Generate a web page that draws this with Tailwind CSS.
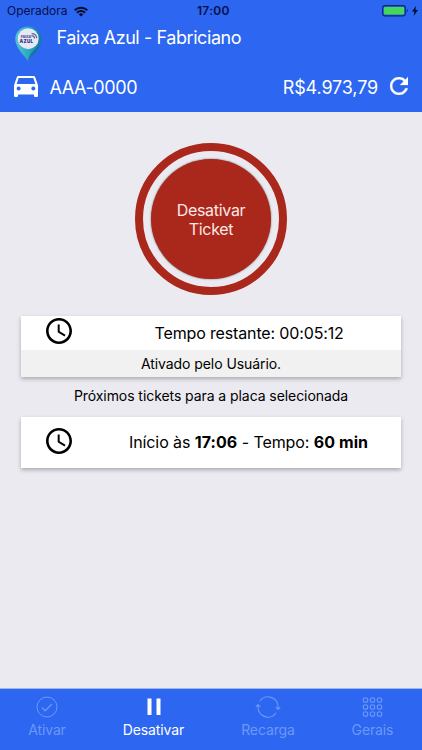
<!DOCTYPE html>
<html lang="pt-BR">
<head>
<meta charset="utf-8">
<title>Faixa Azul - Fabriciano</title>
<script src="https://cdn.jsdelivr.net/npm/@tailwindcss/browser@4"></script>
</head>
<body class="w-[422px] h-[750px] overflow-hidden bg-[#ebeaf1] font-['Inter','Liberation_Sans',sans-serif] text-black flex flex-col whitespace-nowrap">
<header class="h-[112px] shrink-0 bg-[#2c66f1] text-white flex flex-col">
  <div class="h-[22px] pl-[7px] pr-[4px] grid grid-cols-[190px_1fr_auto] items-center text-[#06104a]">
    <div class="flex items-center gap-[6px]">
      <span class="text-[12px] leading-[22px]">Operadora</span>
      <svg class="w-[14px] h-[11px]" viewBox="0 0 14 11" fill="none" stroke="#050b28" stroke-width="2"><path d="M.7 4.2a9 9 0 0 1 12.6 0M3 6.7a5.8 5.8 0 0 1 8 0"/><path d="M7 10.6 4.8 8.4a3.2 3.2 0 0 1 4.4 0z" fill="#050b28" stroke="none"/></svg>
    </div>
    <span class="text-[12px] leading-[22px] font-semibold tracking-[0.3px]">17:00</span>
    <div class="flex items-center gap-[3px]">
      <svg class="w-[27px] h-[12px]" viewBox="0 0 27 12"><rect x=".6" y=".6" width="22.8" height="10.3" rx="2.4" fill="none" stroke="#0b2a70" stroke-width="1.1"/><rect x="2" y="2" width="20" height="7.6" rx="1" fill="#45d65a"/><path d="M24.8 4c1.4.5 1.4 3 0 3.5z" fill="#0b2a70"/></svg>
      <svg class="w-[6px] h-[10px]" viewBox="0 0 6 10"><path d="M4 0 0 5.6h2.5L1.7 10 6 4.1H3.4z" fill="#050b28"/></svg>
    </div>
  </div>
  <div class="h-[40px] pl-[14px] flex items-start">
    <svg class="w-[29px] h-[36px] mt-[4px]" viewBox="0 0 29 36">
      <defs><linearGradient id="pin" x1="0" x2="1"><stop offset="0" stop-color="#58c3d3"/><stop offset=".5" stop-color="#2ba9c5"/><stop offset="1" stop-color="#16769f"/></linearGradient></defs>
      <path d="M14 .5C6.500 .5 1.300 6 1.300 13c0 8.500 8 15.500 12.700 22 4.700-6.500 13.300-13.500 13.300-22C27.300 6 21.500 .5 14 .5z" fill="url(#pin)"/>
      <path d="M14 35c1-9 8-11 12.500-17C24 25 18 29.500 14 35z" fill="#125e87" opacity=".6"/>
      <circle cx="14.200" cy="12.700" r="10.500" fill="#e4e9f3"/>
      <text x="6.800" y="11.800" font-size="3.600" font-weight="800" fill="#55509b" textLength="10.500">FAIXA</text>
      <text x="5.600" y="16.800" font-size="4.600" font-weight="900" fill="#39348b" textLength="13.500">AZUL</text>
      <path d="M17.600 7.700c2.800-.3 5 1.500 5.200 4.500M17.400 9.700c1.800 0 3 1 3.300 2.800" stroke="#6660a5" fill="none" stroke-width="1.200"/>
    </svg>
    <h1 class="ml-[13.500px] mt-[4px] text-[18px] leading-[24px] font-normal tracking-[-0.42px]">Faixa Azul - Fabriciano</h1>
  </div>
  <div class="h-[50px] pl-[14px] pr-[14px] flex items-center justify-between">
    <div class="flex items-center">
      <svg class="w-[24px] h-[21px] mt-[-1px]" viewBox="3 5 18 16" preserveAspectRatio="none" fill="white"><path d="M18.920 6.010C18.720 5.420 18.160 5 17.500 5h-11c-.66 0-1.210.42-1.420 1.010L3 12v8c0 .55.45 1 1 1h1c.55 0 1-.45 1-1v-1h12v1c0 .55.45 1 1 1h1c.55 0 1-.45 1-1v-8l-2.080-5.990zM6.500 16c-.83 0-1.500-.67-1.500-1.500S5.670 13 6.500 13s1.500.67 1.500 1.500S7.330 16 6.500 16zm11 0c-.83 0-1.500-.67-1.500-1.500s.67-1.500 1.500-1.500 1.500.67 1.500 1.500-.67 1.500-1.500 1.500zM5 11l1.500-4.500h11L19 11H5z"/></svg>
      <span class="ml-[11.500px] mt-[2px] text-[18px] leading-[24px] tracking-[-0.4px]">AAA-0000</span>
    </div>
    <div class="flex items-center">
      <span class="mr-[12px] mt-[2px] text-[18px] leading-[24px] tracking-[-0.15px]">R$4.973,79</span>
      <svg class="w-[18px] h-[18px] mt-[-2px]" viewBox="4 4 16 16" fill="white"><path stroke="white" stroke-width=".3" d="M17.650 6.350C16.200 4.900 14.210 4 12 4c-4.420 0-7.990 3.580-7.990 8s3.570 8 7.990 8c3.730 0 6.840-2.550 7.730-6h-2.080c-.82 2.330-3.040 4-5.650 4-3.310 0-6-2.690-6-6s2.690-6 6-6c1.660 0 3.140.69 4.220 1.780L13 11h7V4l-2.350 2.350z"/></svg>
    </div>
  </div>
</header>
<main class="flex-1 flex flex-col items-center pt-[31px]">
  <button class="w-[152px] h-[152px] shrink-0 rounded-full border-8 border-[#aa271b] flex items-center justify-center">
    <span class="w-[120px] h-[120px] rounded-full bg-[#aa271b] shadow-[0_0_2px_rgba(0,0,0,0.6)] text-[#fbe9e6] flex items-center justify-center text-center text-[16px] leading-[19.500px] tracking-[-0.3px]"><span class="mt-[2px]">Desativar<br>Ticket</span></span>
  </button>
  <section class="mt-[21px] w-[380px] h-[61px] bg-white shadow-[0_2px_4px_rgba(0,0,0,0.28)]">
    <div class="h-[34px] pl-[25px] flex items-start">
      <svg class="w-[26px] h-[26px] mt-[2px]" viewBox="2 2 20 20"><path d="M11.990 2C6.470 2 2 6.480 2 12s4.470 10 9.990 10C17.520 22 22 17.520 22 12S17.520 2 11.990 2zM12 20c-4.420 0-8-3.580-8-8s3.580-8 8-8 8 3.580 8 8-3.580 8-8 8zm.5-13H11v6l5.250 3.150.75-1.230-4.500-2.670z"/></svg>
      <p class="ml-[82.500px] leading-[34px] text-[16px] tracking-[-0.140px]">Tempo restante: 00:05:12</p>
    </div>
    <div class="h-[27px] bg-[#f1f1f1] text-center text-[14px] leading-[28px] tracking-[-0.070px]">Ativado pelo Usuário.</div>
  </section>
  <p class="h-[40px] leading-[38px] text-[14px] tracking-[-0.070px]">Próximos tickets para a placa selecionada</p>
  <section class="w-[380px] h-[51px] bg-white shadow-[0_2px_4px_rgba(0,0,0,0.28)] pl-[25px] flex items-center">
    <svg class="w-[26px] h-[26px] mt-[-3px]" viewBox="2 2 20 20"><path d="M11.990 2C6.470 2 2 6.480 2 12s4.470 10 9.990 10C17.520 22 22 17.520 22 12S17.520 2 11.990 2zM12 20c-4.420 0-8-3.580-8-8s3.580-8 8-8 8 3.580 8 8-3.580 8-8 8zm.5-13H11v6l5.250 3.150.75-1.230-4.500-2.670z"/></svg>
    <p class="ml-[57px] mt-[-2px] text-[16px] leading-[24px] tracking-[-0.1px]">Início às <b class="tracking-[0.1px]">17:06</b> - Tempo: <b class="tracking-[0.1px]">60 min</b></p>
  </section>
</main>
<nav class="h-[62px] shrink-0 bg-[#2c66f1] border-t border-[#9cb5f3] text-[#6c98f7] text-[14px] leading-[20px] tracking-[-0.120px] grid grid-cols-[94px_119px_110px_99px] text-center">
  <a class="flex flex-col items-center pt-[7px]">
    <svg class="w-[22px] h-[22px]" viewBox="0 0 22 22" fill="none" stroke="currentColor"><circle cx="11" cy="11" r="10"/><path d="m6 11.500 3.200 3.300L16 8" stroke-width="1.300"/></svg>
    <span class="mt-[2px]">Ativar</span>
  </a>
  <a class="flex flex-col items-center pt-[7px] text-white">
    <svg class="w-[22px] h-[22px]" viewBox="0 0 22 22" fill="currentColor"><path d="M4.500 2.500h4v16.500h-4zM13.500 2.500h4v16.500h-4z"/></svg>
    <span class="mt-[2px]">Desativar</span>
  </a>
  <a class="flex flex-col items-center pt-[7px]">
    <svg class="w-[26px] h-[22px]" viewBox="0 0 26 22" fill="none" stroke="currentColor" stroke-width="1.100"><path d="M4.800 5.200A10 10 0 0 1 23 11v2M20.700 11.200l2.300 2.300 2.200-2.300M21.200 16.800A10 10 0 0 1 3 11V9M.800 10.800 3 8.500l2.300 2.300"/></svg>
    <span class="mt-[2px]">Recarga</span>
  </a>
  <a class="flex flex-col items-center pt-[7px]">
    <svg class="w-[22px] h-[22px] mr-[2px]" viewBox="0 0 22 22" fill="none" stroke="currentColor" stroke-width="1.100"><circle cx="4.500" cy="4" r="2.300"/><circle cx="11.500" cy="4" r="2.300"/><circle cx="18.500" cy="4" r="2.300"/><circle cx="4.500" cy="11" r="2.300"/><circle cx="11.500" cy="11" r="2.300"/><circle cx="18.500" cy="11" r="2.300"/><circle cx="4.500" cy="18" r="2.300"/><circle cx="11.500" cy="18" r="2.300"/><circle cx="18.500" cy="18" r="2.300"/></svg>
    <span class="mt-[2px]">Gerais</span>
  </a>
</nav>
</body>
</html>
